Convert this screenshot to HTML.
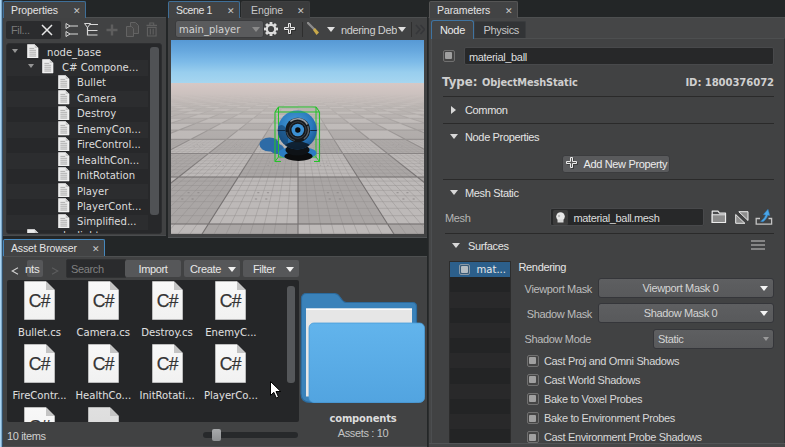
<!DOCTYPE html>
<html><head><meta charset="utf-8">
<style>
*{box-sizing:border-box;margin:0;padding:0}
html,body{width:785px;height:447px;overflow:hidden;background:#232627}
body{position:relative;font-family:"Liberation Sans",sans-serif;font-size:11px;color:#d6d6d6;letter-spacing:-0.35px}
.abs{position:absolute}
.panel{position:absolute;background:#414243;border-top:1px solid #4d4f50}
.tab{position:absolute;height:17px;background:#424344;border:1px solid #3f6f98;border-bottom:none;border-radius:2px 2px 0 0;line-height:16px;padding-left:7px;color:#e4e4e4;white-space:nowrap;font-size:10.5px;letter-spacing:-0.1px}
.tab.in{background:#3a3b3c;border-color:#3e3f40;color:#c8c8c8}
.tab .x{position:absolute;right:4.5px;top:0.5px;font-size:8.5px;color:#c8c8c8;letter-spacing:0}
.os{font-family:"DejaVu Sans Condensed","DejaVu Sans",sans-serif;font-size:11.2px;letter-spacing:0}
.t{position:absolute;white-space:nowrap;line-height:14px}
.row{position:absolute;left:0;width:141px;height:15.45px}
.row.alt{background:#2c2d2f}
.sep{position:absolute;left:443px;width:331px;height:1px;background:#2c2c2c}
.cb{position:absolute;width:11px;height:11px;background:#565656;border-radius:2px}
.cb:after{content:"";position:absolute;left:2px;top:2px;width:7px;height:7px;background:#a8a8a8;border-radius:1px}
.combo{position:absolute;height:19px;background:#565656;border-radius:2px;line-height:18px;text-align:center;color:#d8d8d8}
.btn{position:absolute;background:#565759;border-radius:2px;text-align:center;color:#e8e8e8}
.arr{position:absolute;width:0;height:0;border-left:4px solid transparent;border-right:4px solid transparent;border-top:5px solid #e0e0e0}
.arrr{position:absolute;width:0;height:0;border-top:4px solid transparent;border-bottom:4px solid transparent;border-left:5px solid #e0e0e0}
</style></head><body>

<!-- left window edge -->
<div class="abs" style="left:0;top:0;width:1px;height:447px;background:#a9d4f3"></div>
<div class="abs" style="left:1px;top:0;width:1px;height:447px;background:#7fa9c9"></div>
<div class="abs" style="left:2px;top:0;width:1px;height:447px;background:#33506a"></div>

<!-- ================= PROPERTIES ================= -->
<div class="panel" style="left:3px;top:17px;width:163px;height:219px;border-bottom:1px solid #4a4c4e"></div>
<div class="tab" style="left:3px;top:1px;width:83px">Properties<span class="x">✕</span></div>
<div id="props">
<div class="abs" style="left:6px;top:21px;width:55px;height:18px;background:#2b2c2e;border-radius:2px"></div>
<div class="t" style="left:11px;top:23px;color:#7a7a7a">Fil...</div>
<svg class="abs" style="left:41px;top:24px" width="12" height="12" viewBox="0 0 12 12"><path d="M1 1l10 10M11 1L1 11" stroke="#e8e8e8" stroke-width="1.5"/></svg>
<svg class="abs" style="left:65px;top:22px" width="14" height="16" viewBox="0 0 14 16"><path d="M1 1.5l4 2.5l-4 2.5zM1 9.5l4 2.5l-4 2.5z" fill="none" stroke="#d8d8d8" stroke-width="1"/><path d="M5 4h8M5 12h8" stroke="#d8d8d8" stroke-width="1.2"/></svg>
<svg class="abs" style="left:84px;top:22px" width="15" height="16" viewBox="0 0 15 16"><path d="M0.500 1.500h6l-3 4z" fill="none" stroke="#d8d8d8" stroke-width="1"/><path d="M6 2.5h8M3.500 5v8.500M3.500 8.500h10M3.500 13h10" stroke="#d8d8d8" stroke-width="1.2" fill="none"/></svg>
<svg class="abs" style="left:106px;top:24px" width="12" height="12" viewBox="0 0 12 12"><path d="M6 0.5v11M0.5 6h11" stroke="#5e5e5e" stroke-width="2.4"/></svg>
<svg class="abs" style="left:126px;top:22px" width="13" height="15" viewBox="0 0 13 15"><path d="M4.5 0.5h5l3 3v8h-8z" fill="#4a4a4a" stroke="#636363"/><path d="M0.5 4.5h5l2 2v8h-7z" fill="#4a4a4a" stroke="#636363"/></svg>
<svg class="abs" style="left:146px;top:22px" width="11.5" height="14.5" viewBox="0 0 12 15"><path d="M0.5 3.5h11M4 3V1h4v2M1.5 5.5h9v9h-9zM4.5 7v6M7.5 7v6" fill="none" stroke="#606060" stroke-width="1.2"/></svg>
<div class="abs" style="left:6px;top:43px;width:156px;height:190.5px;background:#27282a;border-radius:3px;overflow:hidden;border:1px solid #2d2e30">
<div class="row" style="top:1.00px"></div>
<svg class="abs" style="left:20px;top:-0.2px" width="11.5" height="14.5" viewBox="0 0 12 15"><path d="M0.5 0.5h7.5l3.5 3.5v10.5h-11z" fill="#ececec" stroke="#fafafa" stroke-width="0.6"/><path d="M8 0.5v3.5h3.5z" fill="#c8c8c8"/><path d="M2.5 4.5h5M2.5 6.5h7M2.5 8.5h7M2.5 10.5h7M2.5 12.5h7" stroke="#a2a2a2" stroke-width="0.9"/></svg>
<div class="t os" style="left:40px;top:1.50px;color:#dcdcdc">node_base</div>
<div class="arr" style="left:4.5px;top:5.0px;border-top-color:#959595;border-left-width:3.5px;border-right-width:3.5px;border-top-width:4.2px"></div>
<div class="row alt" style="top:16.45px"></div>
<svg class="abs" style="left:35px;top:15.2px" width="11.5" height="14.5" viewBox="0 0 12 15"><path d="M0.5 0.5h7.5l3.5 3.5v10.5h-11z" fill="#ececec" stroke="#fafafa" stroke-width="0.6"/><path d="M8 0.5v3.5h3.5z" fill="#c8c8c8"/><path d="M2.5 4.5h5M2.5 6.5h7M2.5 8.5h7M2.5 10.5h7M2.5 12.5h7" stroke="#a2a2a2" stroke-width="0.9"/></svg>
<div class="t os" style="left:55px;top:16.95px;color:#dcdcdc">C# Compone...</div>
<div class="arr" style="left:20.5px;top:20.4px;border-top-color:#959595;border-left-width:3.5px;border-right-width:3.5px;border-top-width:4.2px"></div>
<div class="row" style="top:31.90px"></div>
<svg class="abs" style="left:51px;top:30.7px" width="11.5" height="14.5" viewBox="0 0 12 15"><path d="M0.5 0.5h7.5l3.5 3.5v10.5h-11z" fill="#ececec" stroke="#fafafa" stroke-width="0.6"/><path d="M8 0.5v3.5h3.5z" fill="#c8c8c8"/><path d="M2.5 4.5h5M2.5 6.5h7M2.5 8.5h7M2.5 10.5h7M2.5 12.5h7" stroke="#a2a2a2" stroke-width="0.9"/></svg>
<div class="t os" style="left:70px;top:32.40px;color:#dcdcdc">Bullet</div>
<div class="row alt" style="top:47.35px"></div>
<svg class="abs" style="left:51px;top:46.1px" width="11.5" height="14.5" viewBox="0 0 12 15"><path d="M0.5 0.5h7.5l3.5 3.5v10.5h-11z" fill="#ececec" stroke="#fafafa" stroke-width="0.6"/><path d="M8 0.5v3.5h3.5z" fill="#c8c8c8"/><path d="M2.5 4.5h5M2.5 6.5h7M2.5 8.5h7M2.5 10.5h7M2.5 12.5h7" stroke="#a2a2a2" stroke-width="0.9"/></svg>
<div class="t os" style="left:70px;top:47.85px;color:#dcdcdc">Camera</div>
<div class="row" style="top:62.80px"></div>
<svg class="abs" style="left:51px;top:61.6px" width="11.5" height="14.5" viewBox="0 0 12 15"><path d="M0.5 0.5h7.5l3.5 3.5v10.5h-11z" fill="#ececec" stroke="#fafafa" stroke-width="0.6"/><path d="M8 0.5v3.5h3.5z" fill="#c8c8c8"/><path d="M2.5 4.5h5M2.5 6.5h7M2.5 8.5h7M2.5 10.5h7M2.5 12.5h7" stroke="#a2a2a2" stroke-width="0.9"/></svg>
<div class="t os" style="left:70px;top:63.30px;color:#dcdcdc">Destroy</div>
<div class="row alt" style="top:78.25px"></div>
<svg class="abs" style="left:51px;top:77.0px" width="11.5" height="14.5" viewBox="0 0 12 15"><path d="M0.5 0.5h7.5l3.5 3.5v10.5h-11z" fill="#ececec" stroke="#fafafa" stroke-width="0.6"/><path d="M8 0.5v3.5h3.5z" fill="#c8c8c8"/><path d="M2.5 4.5h5M2.5 6.5h7M2.5 8.5h7M2.5 10.5h7M2.5 12.5h7" stroke="#a2a2a2" stroke-width="0.9"/></svg>
<div class="t os" style="left:70px;top:78.75px;color:#dcdcdc">EnemyCon...</div>
<div class="row" style="top:93.70px"></div>
<svg class="abs" style="left:51px;top:92.5px" width="11.5" height="14.5" viewBox="0 0 12 15"><path d="M0.5 0.5h7.5l3.5 3.5v10.5h-11z" fill="#ececec" stroke="#fafafa" stroke-width="0.6"/><path d="M8 0.5v3.5h3.5z" fill="#c8c8c8"/><path d="M2.5 4.5h5M2.5 6.5h7M2.5 8.5h7M2.5 10.5h7M2.5 12.5h7" stroke="#a2a2a2" stroke-width="0.9"/></svg>
<div class="t os" style="left:70px;top:94.20px;color:#dcdcdc">FireControl...</div>
<div class="row alt" style="top:109.15px"></div>
<svg class="abs" style="left:51px;top:107.9px" width="11.5" height="14.5" viewBox="0 0 12 15"><path d="M0.5 0.5h7.5l3.5 3.5v10.5h-11z" fill="#ececec" stroke="#fafafa" stroke-width="0.6"/><path d="M8 0.5v3.5h3.5z" fill="#c8c8c8"/><path d="M2.5 4.5h5M2.5 6.5h7M2.5 8.5h7M2.5 10.5h7M2.5 12.5h7" stroke="#a2a2a2" stroke-width="0.9"/></svg>
<div class="t os" style="left:70px;top:109.65px;color:#dcdcdc">HealthCon...</div>
<div class="row" style="top:124.60px"></div>
<svg class="abs" style="left:51px;top:123.4px" width="11.5" height="14.5" viewBox="0 0 12 15"><path d="M0.5 0.5h7.5l3.5 3.5v10.5h-11z" fill="#ececec" stroke="#fafafa" stroke-width="0.6"/><path d="M8 0.5v3.5h3.5z" fill="#c8c8c8"/><path d="M2.5 4.5h5M2.5 6.5h7M2.5 8.5h7M2.5 10.5h7M2.5 12.5h7" stroke="#a2a2a2" stroke-width="0.9"/></svg>
<div class="t os" style="left:70px;top:125.10px;color:#dcdcdc">InitRotation</div>
<div class="row alt" style="top:140.05px"></div>
<svg class="abs" style="left:51px;top:138.8px" width="11.5" height="14.5" viewBox="0 0 12 15"><path d="M0.5 0.5h7.5l3.5 3.5v10.5h-11z" fill="#ececec" stroke="#fafafa" stroke-width="0.6"/><path d="M8 0.5v3.5h3.5z" fill="#c8c8c8"/><path d="M2.5 4.5h5M2.5 6.5h7M2.5 8.5h7M2.5 10.5h7M2.5 12.5h7" stroke="#a2a2a2" stroke-width="0.9"/></svg>
<div class="t os" style="left:70px;top:140.55px;color:#dcdcdc">Player</div>
<div class="row" style="top:155.50px"></div>
<svg class="abs" style="left:51px;top:154.3px" width="11.5" height="14.5" viewBox="0 0 12 15"><path d="M0.5 0.5h7.5l3.5 3.5v10.5h-11z" fill="#ececec" stroke="#fafafa" stroke-width="0.6"/><path d="M8 0.5v3.5h3.5z" fill="#c8c8c8"/><path d="M2.5 4.5h5M2.5 6.5h7M2.5 8.5h7M2.5 10.5h7M2.5 12.5h7" stroke="#a2a2a2" stroke-width="0.9"/></svg>
<div class="t os" style="left:70px;top:156.00px;color:#dcdcdc">PlayerCont...</div>
<div class="row alt" style="top:170.95px"></div>
<svg class="abs" style="left:51px;top:169.8px" width="11.5" height="14.5" viewBox="0 0 12 15"><path d="M0.5 0.5h7.5l3.5 3.5v10.5h-11z" fill="#ececec" stroke="#fafafa" stroke-width="0.6"/><path d="M8 0.5v3.5h3.5z" fill="#c8c8c8"/><path d="M2.5 4.5h5M2.5 6.5h7M2.5 8.5h7M2.5 10.5h7M2.5 12.5h7" stroke="#a2a2a2" stroke-width="0.9"/></svg>
<div class="t os" style="left:70px;top:171.45px;color:#dcdcdc">Simplified...</div>
<div class="row" style="top:186.40px"></div>
<svg class="abs" style="left:20px;top:185.2px" width="11.5" height="14.5" viewBox="0 0 12 15"><path d="M0.5 0.5h7.5l3.5 3.5v10.5h-11z" fill="#ececec" stroke="#fafafa" stroke-width="0.6"/><path d="M8 0.5v3.5h3.5z" fill="#c8c8c8"/><path d="M2.5 4.5h5M2.5 6.5h7M2.5 8.5h7M2.5 10.5h7M2.5 12.5h7" stroke="#a2a2a2" stroke-width="0.9"/></svg>
<div class="t os" style="left:40px;top:185.10px;color:#dcdcdc">node_light</div>

<div class="abs" style="left:143px;top:2.5px;width:8.5px;height:168px;background:#505255;border-radius:3px"></div>
</div>
</div>

<!-- ================= SCENE ================= -->
<div class="panel" style="left:168px;top:17px;width:259px;height:221px;border-bottom:1px solid #505355"></div>
<div class="tab" style="left:168px;top:1px;width:72px;letter-spacing:-0.35px">Scene 1<span class="x" style="right:4.5px">✕</span></div>
<div class="tab in" style="left:241px;top:1px;width:69px;padding-left:9px">Engine<span class="x" style="right:4.5px">✕</span></div>
<div id="scene">
<div class="abs" style="left:175px;top:20px;width:88.5px;height:18px;background:#5a5b5d;border-radius:3px;border:1px solid #3a3b3d"></div>
<div class="t os" style="left:179px;top:22.5px;color:#d2d2d2;font-size:11.1px">main_player</div>
<div class="arr" style="left:252px;top:27px;border-top-color:#8a8a8a;border-left-width:4px;border-right-width:4px"></div>
<svg class="abs" style="left:264px;top:22px" width="14" height="14" viewBox="-7 -7 14 14"><g fill="#dcdcdc"><rect x="-1.4" y="-7" width="2.8" height="3.2" transform="rotate(0)"/><rect x="-1.4" y="-7" width="2.8" height="3.2" transform="rotate(45)"/><rect x="-1.4" y="-7" width="2.8" height="3.2" transform="rotate(90)"/><rect x="-1.4" y="-7" width="2.8" height="3.2" transform="rotate(135)"/><rect x="-1.4" y="-7" width="2.8" height="3.2" transform="rotate(180)"/><rect x="-1.4" y="-7" width="2.8" height="3.2" transform="rotate(225)"/><rect x="-1.4" y="-7" width="2.8" height="3.2" transform="rotate(270)"/><rect x="-1.4" y="-7" width="2.8" height="3.2" transform="rotate(315)"/></g><circle r="4.2" fill="none" stroke="#dcdcdc" stroke-width="2.2"/></svg>
<svg class="abs" style="left:284px;top:23px" width="12" height="12" viewBox="0 0 12 12"><path d="M5.500 1.500h2v4h4v2h-4v4h-2v-4h-4v-2h4z" fill="none" stroke="#222" stroke-width="1" opacity="0.6"/><path d="M4.500 0.500h2v4h4v2h-4v4h-2v-4h-4v-2h4z" fill="#555" stroke="#ececec" stroke-width="1"/></svg>
<div class="abs" style="left:302px;top:22px;width:1px;height:15px;background:#2e2e2e"></div>
<svg class="abs" style="left:307px;top:22px" width="13" height="14" viewBox="0 0 13 14"><path d="M1 1l6 6" stroke="#8c8c8c" stroke-width="2.4" stroke-linecap="round"/><path d="M6 8l2-2l4 4.5l-2.5 2.5z" fill="#c9a94a"/></svg>
<div class="arr" style="left:327px;top:27px"></div>
<div class="t" style="left:341px;top:23px;width:56px;overflow:hidden;color:#d0d0d0;direction:rtl;text-align:right"><span style="direction:ltr;unicode-bidi:bidi-override;display:inline-block">Rendering Deb</span></div>
<div class="arr" style="left:398px;top:27px"></div>
<div class="abs" style="left:411px;top:22px;width:1px;height:15px;background:#2e2e2e"></div>
<svg class="abs" style="left:415px;top:24px" width="10" height="11" viewBox="0 0 10 11"><path d="M1 1l4 4.5l-4 4.5M5.5 1l4 4.5l-4 4.5" fill="none" stroke="#36373a" stroke-width="1.6"/></svg>
<svg class="abs" style="left:171px;top:40px" width="253" height="194" viewBox="0 0 253 194"><defs><linearGradient id="sky" x1="0" y1="0" x2="0" y2="1"><stop offset="0" stop-color="#5799d5"/><stop offset="0.25" stop-color="#67a8de"/><stop offset="0.5" stop-color="#7cbae8"/><stop offset="0.75" stop-color="#98ceee"/><stop offset="1" stop-color="#a6d6f0"/></linearGradient><linearGradient id="fog" x1="0" y1="0" x2="0" y2="1"><stop offset="0" stop-color="#d6c8c6" stop-opacity="1"/><stop offset="0.08" stop-color="#d2c6c3" stop-opacity="0.9"/><stop offset="0.25" stop-color="#c9c2be" stop-opacity="0.6"/><stop offset="0.6" stop-color="#c0bbb8" stop-opacity="0.25"/><stop offset="1" stop-color="#bab6b4" stop-opacity="0"/></linearGradient><radialGradient id="ball" cx="0.45" cy="0.35" r="0.7"><stop offset="0" stop-color="#479cd8"/><stop offset="0.6" stop-color="#2a7abd"/><stop offset="1" stop-color="#184f86"/></radialGradient><radialGradient id="metal" cx="0.5" cy="0.4" r="0.6"><stop offset="0" stop-color="#222"/><stop offset="0.6" stop-color="#3a3f44"/><stop offset="0.8" stop-color="#9aa4ac"/><stop offset="1" stop-color="#1a1a1a"/></radialGradient><linearGradient id="lg" gradientUnits="userSpaceOnUse" x1="0" y1="43" x2="0" y2="194"><stop offset="0" stop-color="#6e6a6a" stop-opacity="0"/><stop offset="0.1" stop-color="#6e6a6a" stop-opacity="0.12"/><stop offset="0.3" stop-color="#6e6a6a" stop-opacity="0.55"/><stop offset="0.6" stop-color="#6e6a6a" stop-opacity="0.85"/><stop offset="1" stop-color="#6e6a6a" stop-opacity="0.9"/></linearGradient><linearGradient id="lf" gradientUnits="userSpaceOnUse" x1="0" y1="43" x2="0" y2="194"><stop offset="0" stop-color="#8a8685" stop-opacity="0"/><stop offset="0.3" stop-color="#8a8685" stop-opacity="0.15"/><stop offset="0.6" stop-color="#8a8685" stop-opacity="0.55"/><stop offset="1" stop-color="#8a8685" stop-opacity="0.7"/></linearGradient></defs><rect width="253" height="43" fill="url(#sky)"/><rect y="43" width="253" height="151" fill="#bdb9b8"/><path d="M27.9 199.0L127.0 199.0L127.0 184.0L37.5 184.0zM226.1 199.0L325.1 199.0L306.1 184.0L216.5 184.0zM-52.1 184.0L37.5 184.0L67.3 137.0L7.6 137.0zM127.0 184.0L216.5 184.0L186.7 137.0L127.0 137.0zM306.1 184.0L395.6 184.0L306.1 137.0L246.4 137.0zM-52.1 137.0L7.6 137.0L37.5 113.5L-7.3 113.5zM67.3 137.0L127.0 137.0L127.0 113.5L82.2 113.5zM186.7 137.0L246.4 137.0L216.5 113.5L171.8 113.5zM-52.1 113.5L-7.3 113.5L19.6 99.4L-16.3 99.4zM37.5 113.5L82.2 113.5L91.2 99.4L55.4 99.4zM127.0 113.5L171.8 113.5L162.8 99.4L127.0 99.4zM216.5 113.5L261.3 113.5L234.4 99.4L198.6 99.4zM-52.1 99.4L-16.3 99.4L7.6 90.0L-22.2 90.0zM19.6 99.4L55.4 99.4L67.3 90.0L37.5 90.0zM91.2 99.4L127.0 99.4L127.0 90.0L97.2 90.0zM162.8 99.4L198.6 99.4L186.7 90.0L156.8 90.0zM234.4 99.4L270.3 99.4L246.4 90.0L216.5 90.0zM7.6 90.0L37.5 90.0L50.3 83.3L24.7 83.3zM67.3 90.0L97.2 90.0L101.4 83.3L75.8 83.3zM127.0 90.0L156.8 90.0L152.6 83.3L127.0 83.3zM186.7 90.0L216.5 90.0L203.7 83.3L178.2 83.3zM246.4 90.0L276.2 90.0L254.9 83.3L229.3 83.3zM-0.9 83.3L24.7 83.3L37.5 78.3L15.1 78.3zM50.3 83.3L75.8 83.3L82.2 78.3L59.8 78.3zM101.4 83.3L127.0 83.3L127.0 78.3L104.6 78.3zM152.6 83.3L178.2 83.3L171.8 78.3L149.4 78.3zM203.7 83.3L229.3 83.3L216.5 78.3L194.2 78.3zM254.9 83.3L280.5 83.3L261.3 78.3L238.9 78.3zM-7.3 78.3L15.1 78.3L27.5 74.3L7.6 74.3zM37.5 78.3L59.8 78.3L67.3 74.3L47.4 74.3zM82.2 78.3L104.6 78.3L107.1 74.3L87.2 74.3zM127.0 78.3L149.4 78.3L146.9 74.3L127.0 74.3zM171.8 78.3L194.2 78.3L186.7 74.3L166.8 74.3zM216.5 78.3L238.9 78.3L226.5 74.3L206.6 74.3zM261.3 78.3L283.7 78.3L266.3 74.3L246.4 74.3zM-12.3 74.3L7.6 74.3L19.6 71.2L1.6 71.2zM27.5 74.3L47.4 74.3L55.4 71.2L37.5 71.2zM67.3 74.3L87.2 74.3L91.2 71.2L73.3 71.2zM107.1 74.3L127.0 74.3L127.0 71.2L109.1 71.2zM146.9 74.3L166.8 74.3L162.8 71.2L144.9 71.2zM186.7 74.3L206.6 74.3L198.6 71.2L180.7 71.2zM226.5 74.3L246.4 74.3L234.4 71.2L216.5 71.2zM266.3 74.3L286.2 74.3L270.3 71.2L252.4 71.2zM-16.3 71.2L1.6 71.2L13.0 68.6L-3.2 68.6zM19.6 71.2L37.5 71.2L45.6 68.6L29.3 68.6zM55.4 71.2L73.3 71.2L78.2 68.6L61.9 68.6zM91.2 71.2L109.1 71.2L110.7 68.6L94.4 68.6zM127.0 71.2L144.9 71.2L143.3 68.6L127.0 68.6zM162.8 71.2L180.7 71.2L175.8 68.6L159.6 68.6zM198.6 71.2L216.5 71.2L208.4 68.6L192.1 68.6zM234.4 71.2L252.4 71.2L241.0 68.6L224.7 68.6zM-19.5 68.6L-3.2 68.6L7.6 66.5L-7.3 66.5zM13.0 68.6L29.3 68.6L37.5 66.5L22.5 66.5zM45.6 68.6L61.9 68.6L67.3 66.5L52.4 66.5zM78.2 68.6L94.4 68.6L97.2 66.5L82.2 66.5zM110.7 68.6L127.0 68.6L127.0 66.5L112.1 66.5zM143.3 68.6L159.6 68.6L156.8 66.5L141.9 66.5zM175.8 68.6L192.1 68.6L186.7 66.5L171.8 66.5zM208.4 68.6L224.7 68.6L216.5 66.5L201.6 66.5zM241.0 68.6L257.2 68.6L246.4 66.5L231.5 66.5zM-22.2 66.5L-7.3 66.5L3.0 64.7L-10.7 64.7zM7.6 66.5L22.5 66.5L30.6 64.7L16.8 64.7zM37.5 66.5L52.4 66.5L58.1 64.7L44.4 64.7zM67.3 66.5L82.2 66.5L85.7 64.7L71.9 64.7zM97.2 66.5L112.1 66.5L113.2 64.7L99.5 64.7zM127.0 66.5L141.9 66.5L140.8 64.7L127.0 64.7zM156.8 66.5L171.8 66.5L168.3 64.7L154.5 64.7zM186.7 66.5L201.6 66.5L195.9 64.7L182.1 64.7zM216.5 66.5L231.5 66.5L223.4 64.7L209.6 64.7zM246.4 66.5L261.3 66.5L251.0 64.7L237.2 64.7zM3.0 64.7L16.8 64.7L24.7 63.1L11.9 63.1zM30.6 64.7L44.4 64.7L50.3 63.1L37.5 63.1zM58.1 64.7L71.9 64.7L75.8 63.1L63.0 63.1zM85.7 64.7L99.5 64.7L101.4 63.1L88.6 63.1zM113.2 64.7L127.0 64.7L127.0 63.1L114.2 63.1zM140.8 64.7L154.5 64.7L152.6 63.1L139.8 63.1zM168.3 64.7L182.1 64.7L178.2 63.1L165.4 63.1zM195.9 64.7L209.6 64.7L203.7 63.1L191.0 63.1zM223.4 64.7L237.2 64.7L229.3 63.1L216.5 63.1zM251.0 64.7L264.7 64.7L254.9 63.1L242.1 63.1zM-0.9 63.1L11.9 63.1L19.6 61.8L7.6 61.8zM24.7 63.1L37.5 63.1L43.4 61.8L31.5 61.8zM50.3 63.1L63.0 63.1L67.3 61.8L55.4 61.8zM75.8 63.1L88.6 63.1L91.2 61.8L79.2 61.8zM101.4 63.1L114.2 63.1L115.1 61.8L103.1 61.8zM127.0 63.1L139.8 63.1L138.9 61.8L127.0 61.8zM152.6 63.1L165.4 63.1L162.8 61.8L150.9 61.8zM178.2 63.1L191.0 63.1L186.7 61.8L174.8 61.8zM203.7 63.1L216.5 63.1L210.6 61.8L198.6 61.8zM229.3 63.1L242.1 63.1L234.4 61.8L222.5 61.8zM254.9 63.1L267.7 63.1L258.3 61.8L246.4 61.8zM-4.3 61.8L7.6 61.8L15.1 60.6L3.9 60.6zM19.6 61.8L31.5 61.8L37.5 60.6L26.3 60.6zM43.4 61.8L55.4 61.8L59.8 60.6L48.7 60.6zM67.3 61.8L79.2 61.8L82.2 60.6L71.0 60.6zM91.2 61.8L103.1 61.8L104.6 60.6L93.4 60.6zM115.1 61.8L127.0 61.8L127.0 60.6L115.8 60.6zM138.9 61.8L150.9 61.8L149.4 60.6L138.2 60.6zM162.8 61.8L174.8 61.8L171.8 60.6L160.6 60.6zM186.7 61.8L198.6 61.8L194.2 60.6L183.0 60.6zM210.6 61.8L222.5 61.8L216.5 60.6L205.3 60.6zM234.4 61.8L246.4 61.8L238.9 60.6L227.7 60.6zM258.3 61.8L270.3 61.8L261.3 60.6L250.1 60.6zM-7.3 60.6L3.9 60.6L11.1 59.6L0.6 59.6zM15.1 60.6L26.3 60.6L32.2 59.6L21.7 59.6zM37.5 60.6L48.7 60.6L53.3 59.6L42.7 59.6zM59.8 60.6L71.0 60.6L74.3 59.6L63.8 59.6zM82.2 60.6L93.4 60.6L95.4 59.6L84.9 59.6zM104.6 60.6L115.8 60.6L116.5 59.6L105.9 59.6zM127.0 60.6L138.2 60.6L137.5 59.6L127.0 59.6zM149.4 60.6L160.6 60.6L158.6 59.6L148.1 59.6zM171.8 60.6L183.0 60.6L179.7 59.6L169.1 59.6zM194.2 60.6L205.3 60.6L200.7 59.6L190.2 59.6zM216.5 60.6L227.7 60.6L221.8 59.6L211.3 59.6zM238.9 60.6L250.1 60.6L242.9 59.6L232.3 59.6zM-9.9 59.6L0.6 59.6L7.6 58.7L-2.3 58.7zM11.1 59.6L21.7 59.6L27.5 58.7L17.6 58.7zM32.2 59.6L42.7 59.6L47.4 58.7L37.5 58.7zM53.3 59.6L63.8 59.6L67.3 58.7L57.4 58.7zM74.3 59.6L84.9 59.6L87.2 58.7L77.3 58.7zM95.4 59.6L105.9 59.6L107.1 58.7L97.2 58.7zM116.5 59.6L127.0 59.6L127.0 58.7L117.1 58.7zM137.5 59.6L148.1 59.6L146.9 58.7L136.9 58.7zM158.6 59.6L169.1 59.6L166.8 58.7L156.8 58.7zM179.7 59.6L190.2 59.6L186.7 58.7L176.7 58.7zM200.7 59.6L211.3 59.6L206.6 58.7L196.6 58.7zM221.8 59.6L232.3 59.6L226.5 58.7L216.5 58.7zM242.9 59.6L253.4 59.6L246.4 58.7L236.4 58.7zM-12.3 58.7L-2.3 58.7L4.5 57.8L-4.9 57.8zM7.6 58.7L17.6 58.7L23.3 57.8L13.9 57.8zM27.5 58.7L37.5 58.7L42.2 57.8L32.8 57.8zM47.4 58.7L57.4 58.7L61.0 57.8L51.6 57.8zM67.3 58.7L77.3 58.7L79.9 57.8L70.5 57.8zM87.2 58.7L97.2 58.7L98.7 57.8L89.3 57.8zM107.1 58.7L117.1 58.7L117.6 57.8L108.2 57.8zM127.0 58.7L136.9 58.7L136.4 57.8L127.0 57.8zM146.9 58.7L156.8 58.7L155.3 57.8L145.8 57.8zM166.8 58.7L176.7 58.7L174.1 57.8L164.7 57.8zM186.7 58.7L196.6 58.7L193.0 57.8L183.5 57.8zM206.6 58.7L216.5 58.7L211.8 57.8L202.4 57.8zM226.5 58.7L236.4 58.7L230.7 57.8L221.2 57.8zM246.4 58.7L256.3 58.7L249.5 57.8L240.1 57.8zM-14.4 57.8L-4.9 57.8L1.6 57.1L-7.3 57.1zM4.5 57.8L13.9 57.8L19.6 57.1L10.6 57.1zM23.3 57.8L32.8 57.8L37.5 57.1L28.5 57.1zM42.2 57.8L51.6 57.8L55.4 57.1L46.4 57.1zM61.0 57.8L70.5 57.8L73.3 57.1L64.3 57.1zM79.9 57.8L89.3 57.8L91.2 57.1L82.2 57.1zM98.7 57.8L108.2 57.8L109.1 57.1L100.1 57.1zM117.6 57.8L127.0 57.8L127.0 57.1L118.0 57.1zM136.4 57.8L145.8 57.8L144.9 57.1L136.0 57.1zM155.3 57.8L164.7 57.8L162.8 57.1L153.9 57.1zM174.1 57.8L183.5 57.8L180.7 57.1L171.8 57.1zM193.0 57.8L202.4 57.8L198.6 57.1L189.7 57.1zM211.8 57.8L221.2 57.8L216.5 57.1L207.6 57.1zM230.7 57.8L240.1 57.8L234.4 57.1L225.5 57.1zM249.5 57.8L258.9 57.8L252.4 57.1L243.4 57.1zM1.6 57.1L10.6 57.1L16.1 56.4L7.6 56.4zM19.6 57.1L28.5 57.1L33.2 56.4L24.7 56.4zM37.5 57.1L46.4 57.1L50.3 56.4L41.7 56.4zM55.4 57.1L64.3 57.1L67.3 56.4L58.8 56.4zM73.3 57.1L82.2 57.1L84.4 56.4L75.8 56.4zM91.2 57.1L100.1 57.1L101.4 56.4L92.9 56.4zM109.1 57.1L118.0 57.1L118.5 56.4L109.9 56.4zM127.0 57.1L136.0 57.1L135.5 56.4L127.0 56.4zM144.9 57.1L153.9 57.1L152.6 56.4L144.1 56.4zM162.8 57.1L171.8 57.1L169.6 56.4L161.1 56.4zM180.7 57.1L189.7 57.1L186.7 56.4L178.2 56.4zM198.6 57.1L207.6 57.1L203.7 56.4L195.2 56.4zM216.5 57.1L225.5 57.1L220.8 56.4L212.3 56.4zM234.4 57.1L243.4 57.1L237.9 56.4L229.3 56.4zM252.4 57.1L261.3 57.1L254.9 56.4L246.4 56.4zM-0.9 56.4L7.6 56.4L13.0 55.8L4.9 55.8zM16.1 56.4L24.7 56.4L29.3 55.8L21.2 55.8zM33.2 56.4L41.7 56.4L45.6 55.8L37.5 55.8zM50.3 56.4L58.8 56.4L61.9 55.8L53.7 55.8zM67.3 56.4L75.8 56.4L78.2 55.8L70.0 55.8zM84.4 56.4L92.9 56.4L94.4 55.8L86.3 55.8zM101.4 56.4L109.9 56.4L110.7 55.8L102.6 55.8zM118.5 56.4L127.0 56.4L127.0 55.8L118.9 55.8zM135.5 56.4L144.1 56.4L143.3 55.8L135.1 55.8zM152.6 56.4L161.1 56.4L159.6 55.8L151.4 55.8zM169.6 56.4L178.2 56.4L175.8 55.8L167.7 55.8zM186.7 56.4L195.2 56.4L192.1 55.8L184.0 55.8zM203.7 56.4L212.3 56.4L208.4 55.8L200.3 55.8zM220.8 56.4L229.3 56.4L224.7 55.8L216.5 55.8zM237.9 56.4L246.4 56.4L241.0 55.8L232.8 55.8zM254.9 56.4L263.4 56.4L257.2 55.8L249.1 55.8zM-3.2 55.8L4.9 55.8L10.2 55.3L2.4 55.3zM13.0 55.8L21.2 55.8L25.8 55.3L18.0 55.3zM29.3 55.8L37.5 55.8L41.4 55.3L33.6 55.3zM45.6 55.8L53.7 55.8L56.9 55.3L49.1 55.3zM61.9 55.8L70.0 55.8L72.5 55.3L64.7 55.3zM78.2 55.8L86.3 55.8L88.1 55.3L80.3 55.3zM94.4 55.8L102.6 55.8L103.6 55.3L95.9 55.3zM110.7 55.8L118.9 55.8L119.2 55.3L111.4 55.3zM127.0 55.8L135.1 55.8L134.8 55.3L127.0 55.3zM143.3 55.8L151.4 55.8L150.4 55.3L142.6 55.3zM159.6 55.8L167.7 55.8L165.9 55.3L158.1 55.3zM175.8 55.8L184.0 55.8L181.5 55.3L173.7 55.3zM192.1 55.8L200.3 55.8L197.1 55.3L189.3 55.3zM208.4 55.8L216.5 55.8L212.6 55.3L204.9 55.3zM224.7 55.8L232.8 55.8L228.2 55.3L220.4 55.3zM241.0 55.8L249.1 55.8L243.8 55.3L236.0 55.3zM257.2 55.8L265.4 55.8L259.4 55.3L251.6 55.3zM-5.4 55.3L2.4 55.3L7.6 54.8L0.2 54.8zM10.2 55.3L18.0 55.3L22.5 54.8L15.1 54.8zM25.8 55.3L33.6 55.3L37.5 54.8L30.0 54.8zM41.4 55.3L49.1 55.3L52.4 54.8L44.9 54.8zM56.9 55.3L64.7 55.3L67.3 54.8L59.8 54.8zM72.5 55.3L80.3 55.3L82.2 54.8L74.8 54.8zM88.1 55.3L95.9 55.3L97.2 54.8L89.7 54.8zM103.6 55.3L111.4 55.3L112.1 54.8L104.6 54.8zM119.2 55.3L127.0 55.3L127.0 54.8L119.5 54.8zM134.8 55.3L142.6 55.3L141.9 54.8L134.5 54.8zM150.4 55.3L158.1 55.3L156.8 54.8L149.4 54.8zM165.9 55.3L173.7 55.3L171.8 54.8L164.3 54.8zM181.5 55.3L189.3 55.3L186.7 54.8L179.2 54.8zM197.1 55.3L204.9 55.3L201.6 54.8L194.2 54.8zM212.6 55.3L220.4 55.3L216.5 54.8L209.1 54.8zM228.2 55.3L236.0 55.3L231.5 54.8L224.0 54.8zM243.8 55.3L251.6 55.3L246.4 54.8L238.9 54.8z" fill="#aaa6a5"/><rect y="43" width="253" height="11.8" fill="#b3afae"/><path d="M0 193.4H253M0 184.0H253M0 175.7H253M0 168.3H253M0 161.7H253M0 155.8H253M0 150.4H253M0 145.5H253M0 141.1H253M0 137.0H253M0 133.2H253M0 129.8H253M0 126.6H253M0 123.6H253M0 120.8H253M0 118.2H253M0 115.8H253M0 113.5H253M0 111.4H253M0 109.4H253M0 107.5H253M0 105.7H253M0 104.0H253M0 102.4H253M0 100.8H253M-340.4 194.0L-47.6 99.4M-328.5 194.0L-43.1 99.4M-316.5 194.0L-38.6 99.4M-304.5 194.0L-34.2 99.4M-292.5 194.0L-29.7 99.4M-280.5 194.0L-25.2 99.4M-268.5 194.0L-20.7 99.4M-244.6 194.0L-11.8 99.4M-232.6 194.0L-7.3 99.4M-220.6 194.0L-2.8 99.4M-208.6 194.0L1.6 99.4M-196.6 194.0L6.1 99.4M-184.6 194.0L10.6 99.4M-172.6 194.0L15.1 99.4M-148.7 194.0L24.0 99.4M-136.7 194.0L28.5 99.4M-124.7 194.0L33.0 99.4M-112.7 194.0L37.5 99.4M-100.7 194.0L41.9 99.4M-88.7 194.0L46.4 99.4M-76.8 194.0L50.9 99.4M-52.8 194.0L59.8 99.4M-40.8 194.0L64.3 99.4M-28.8 194.0L68.8 99.4M-16.8 194.0L73.3 99.4M-4.8 194.0L77.8 99.4M7.1 194.0L82.2 99.4M19.1 194.0L86.7 99.4M43.1 194.0L95.7 99.4M55.1 194.0L100.1 99.4M67.1 194.0L104.6 99.4M79.1 194.0L109.1 99.4M91.0 194.0L113.6 99.4M103.0 194.0L118.0 99.4M115.0 194.0L122.5 99.4M139.0 194.0L131.5 99.4M151.0 194.0L136.0 99.4M163.0 194.0L140.4 99.4M174.9 194.0L144.9 99.4M186.9 194.0L149.4 99.4M198.9 194.0L153.9 99.4M210.9 194.0L158.3 99.4M234.9 194.0L167.3 99.4M246.9 194.0L171.8 99.4M258.8 194.0L176.2 99.4M270.8 194.0L180.7 99.4M282.8 194.0L185.2 99.4M294.8 194.0L189.7 99.4M306.8 194.0L194.2 99.4M330.8 194.0L203.1 99.4M342.7 194.0L207.6 99.4M354.7 194.0L212.1 99.4M366.7 194.0L216.5 99.4M378.7 194.0L221.0 99.4M390.7 194.0L225.5 99.4M402.7 194.0L230.0 99.4M426.6 194.0L238.9 99.4M438.6 194.0L243.4 99.4M450.6 194.0L247.9 99.4M462.6 194.0L252.4 99.4M474.6 194.0L256.8 99.4M486.6 194.0L261.3 99.4M498.6 194.0L265.8 99.4M522.5 194.0L274.7 99.4M534.5 194.0L279.2 99.4M546.5 194.0L283.7 99.4M558.5 194.0L288.2 99.4M570.5 194.0L292.6 99.4M582.5 194.0L297.1 99.4M594.4 194.0L301.6 99.4" stroke="url(#lf)" stroke-width="0.6" fill="none"/><path d="M0 184.0H253M0 137.0H253M0 113.5H253M0 99.4H253M0 90.0H253M0 83.3H253M0 78.3H253M0 74.3H253M0 71.2H253M0 68.6H253M0 66.5H253M0 64.7H253M0 63.1H253M0 61.8H253M0 60.6H253M0 59.6H253M0 58.7H253M0 57.8H253M0 57.1H253M0 56.4H253M0 55.8H253M0 55.3H253M-2787.7 196.0L-96.8 54.8M-2690.5 196.0L-89.4 54.8M-2593.3 196.0L-81.9 54.8M-2496.2 196.0L-74.5 54.8M-2399.0 196.0L-67.0 54.8M-2301.9 196.0L-59.5 54.8M-2204.7 196.0L-52.1 54.8M-2107.6 196.0L-44.6 54.8M-2010.4 196.0L-37.2 54.8M-1913.3 196.0L-29.7 54.8M-1816.1 196.0L-22.2 54.8M-1718.9 196.0L-14.8 54.8M-1621.8 196.0L-7.3 54.8M-1524.6 196.0L0.2 54.8M-1427.5 196.0L7.6 54.8M-1330.3 196.0L15.1 54.8M-1233.2 196.0L22.5 54.8M-1136.0 196.0L30.0 54.8M-1038.9 196.0L37.5 54.8M-941.7 196.0L44.9 54.8M-844.5 196.0L52.4 54.8M-747.4 196.0L59.8 54.8M-650.2 196.0L67.3 54.8M-553.1 196.0L74.8 54.8M-455.9 196.0L82.2 54.8M-358.8 196.0L89.7 54.8M-261.6 196.0L97.2 54.8M-164.5 196.0L104.6 54.8M-67.3 196.0L112.1 54.8M29.8 196.0L119.5 54.8M127.0 196.0L127.0 54.8M224.2 196.0L134.5 54.8M321.3 196.0L141.9 54.8M418.5 196.0L149.4 54.8M515.6 196.0L156.8 54.8M612.8 196.0L164.3 54.8M709.9 196.0L171.8 54.8M807.1 196.0L179.2 54.8M904.2 196.0L186.7 54.8M1001.4 196.0L194.2 54.8M1098.5 196.0L201.6 54.8M1195.7 196.0L209.1 54.8M1292.9 196.0L216.5 54.8M1390.0 196.0L224.0 54.8M1487.2 196.0L231.5 54.8M1584.3 196.0L238.9 54.8M1681.5 196.0L246.4 54.8M1778.6 196.0L253.8 54.8M1875.8 196.0L261.3 54.8M1972.9 196.0L268.8 54.8M2070.1 196.0L276.2 54.8M2167.3 196.0L283.7 54.8M2264.4 196.0L291.2 54.8M2361.6 196.0L298.6 54.8M2458.7 196.0L306.1 54.8M2555.9 196.0L313.5 54.8M2653.0 196.0L321.0 54.8M2750.2 196.0L328.5 54.8M2847.3 196.0L335.9 54.8M2944.5 196.0L343.4 54.8M3041.7 196.0L350.8 54.8" stroke="url(#lg)" stroke-width="1.1" fill="none"/><g fill="#8a8686" opacity="0.7"><ellipse cx="85.0" cy="159.0" rx="1.28" ry="0.70"/><ellipse cx="87.3" cy="152.7" rx="1.21" ry="0.66"/><ellipse cx="95.3" cy="159.0" rx="1.28" ry="0.70"/><ellipse cx="97.0" cy="152.7" rx="1.21" ry="0.66"/><ellipse cx="158.7" cy="159.0" rx="1.28" ry="0.70"/><ellipse cx="157.0" cy="152.7" rx="1.21" ry="0.66"/><ellipse cx="169.0" cy="159.0" rx="1.28" ry="0.70"/><ellipse cx="166.7" cy="152.7" rx="1.21" ry="0.66"/><ellipse cx="232.4" cy="159.0" rx="1.28" ry="0.70"/><ellipse cx="226.6" cy="152.7" rx="1.21" ry="0.66"/><ellipse cx="242.7" cy="159.0" rx="1.28" ry="0.70"/><ellipse cx="236.4" cy="152.7" rx="1.21" ry="0.66"/><ellipse cx="11.3" cy="159.0" rx="1.28" ry="0.70"/><ellipse cx="17.6" cy="152.7" rx="1.21" ry="0.66"/><ellipse cx="21.6" cy="159.0" rx="1.28" ry="0.70"/><ellipse cx="27.4" cy="152.7" rx="1.21" ry="0.66"/><ellipse cx="97.2" cy="125.2" rx="0.90" ry="0.49"/><ellipse cx="98.4" cy="122.0" rx="0.87" ry="0.47"/><ellipse cx="104.6" cy="125.2" rx="0.90" ry="0.49"/><ellipse cx="105.4" cy="122.0" rx="0.87" ry="0.47"/><ellipse cx="149.4" cy="125.2" rx="0.90" ry="0.49"/><ellipse cx="148.6" cy="122.0" rx="0.87" ry="0.47"/><ellipse cx="156.8" cy="125.2" rx="0.90" ry="0.49"/><ellipse cx="155.6" cy="122.0" rx="0.87" ry="0.47"/><ellipse cx="45.0" cy="125.2" rx="0.90" ry="0.49"/><ellipse cx="48.2" cy="122.0" rx="0.87" ry="0.47"/><ellipse cx="52.3" cy="125.2" rx="0.90" ry="0.49"/><ellipse cx="55.3" cy="122.0" rx="0.87" ry="0.47"/><ellipse cx="201.7" cy="125.2" rx="0.90" ry="0.49"/><ellipse cx="198.7" cy="122.0" rx="0.87" ry="0.47"/><ellipse cx="209.0" cy="125.2" rx="0.90" ry="0.49"/><ellipse cx="205.8" cy="122.0" rx="0.87" ry="0.47"/><ellipse cx="-7.2" cy="125.2" rx="0.90" ry="0.49"/><ellipse cx="-1.9" cy="122.0" rx="0.87" ry="0.47"/><ellipse cx="0.1" cy="125.2" rx="0.90" ry="0.49"/><ellipse cx="5.1" cy="122.0" rx="0.87" ry="0.47"/><ellipse cx="253.9" cy="125.2" rx="0.90" ry="0.49"/><ellipse cx="248.9" cy="122.0" rx="0.87" ry="0.47"/><ellipse cx="261.2" cy="125.2" rx="0.90" ry="0.49"/><ellipse cx="255.9" cy="122.0" rx="0.87" ry="0.47"/><ellipse cx="23.1" cy="106.7" rx="0.70" ry="0.38"/><ellipse cx="26.3" cy="104.7" rx="0.68" ry="0.37"/><ellipse cx="28.8" cy="106.7" rx="0.70" ry="0.38"/><ellipse cx="31.8" cy="104.7" rx="0.68" ry="0.37"/><ellipse cx="63.5" cy="106.7" rx="0.70" ry="0.38"/><ellipse cx="65.5" cy="104.7" rx="0.68" ry="0.37"/><ellipse cx="69.2" cy="106.7" rx="0.70" ry="0.38"/><ellipse cx="71.0" cy="104.7" rx="0.68" ry="0.37"/><ellipse cx="104.0" cy="106.7" rx="0.70" ry="0.38"/><ellipse cx="104.7" cy="104.7" rx="0.68" ry="0.37"/><ellipse cx="109.6" cy="106.7" rx="0.70" ry="0.38"/><ellipse cx="110.2" cy="104.7" rx="0.68" ry="0.37"/><ellipse cx="144.4" cy="106.7" rx="0.70" ry="0.38"/><ellipse cx="143.8" cy="104.7" rx="0.68" ry="0.37"/><ellipse cx="150.0" cy="106.7" rx="0.70" ry="0.38"/><ellipse cx="149.3" cy="104.7" rx="0.68" ry="0.37"/><ellipse cx="184.8" cy="106.7" rx="0.70" ry="0.38"/><ellipse cx="183.0" cy="104.7" rx="0.68" ry="0.37"/><ellipse cx="190.5" cy="106.7" rx="0.70" ry="0.38"/><ellipse cx="188.5" cy="104.7" rx="0.68" ry="0.37"/><ellipse cx="225.2" cy="106.7" rx="0.70" ry="0.38"/><ellipse cx="222.2" cy="104.7" rx="0.68" ry="0.37"/><ellipse cx="230.9" cy="106.7" rx="0.70" ry="0.38"/><ellipse cx="227.7" cy="104.7" rx="0.68" ry="0.37"/></g><rect y="43" width="253" height="95" fill="url(#fog)"/><ellipse cx="98.5" cy="104.5" rx="10" ry="7" fill="#2d6ba6"/><ellipse cx="106" cy="109" rx="7" ry="5" fill="#2d6ba6"/><path d="M107.5 67.0L145.0 67.0M107.5 67.0L107.5 117.0M145.0 67.0L145.0 117.0M107.5 117.0L145.0 117.0M104.0 121.5L107.5 117.0M148.5 121.5L145.0 117.0" stroke="#25c12a" stroke-width="1" fill="none"/><ellipse cx="126.5" cy="113" rx="19" ry="6.3" fill="#2b7dc3"/><ellipse cx="127.5" cy="116.30000000000001" rx="14" ry="4.6" fill="#0b0c0d"/><ellipse cx="126.5" cy="110" rx="12" ry="5.5" fill="#0e1216"/><clipPath id="bc"><circle cx="126.30000000000001" cy="90" r="19.5"/></clipPath><circle cx="126.30000000000001" cy="90" r="19.5" fill="url(#ball)"/><g clip-path="url(#bc)"><ellipse cx="126.30000000000001" cy="109" rx="15" ry="7.5" fill="#0c151e" opacity="0.85"/><ellipse cx="110.30000000000001" cy="98" rx="7" ry="13" fill="#123a62" opacity="0.55"/></g><circle cx="126.80000000000001" cy="90" r="12.3" fill="#15181b"/><path d="M119.30000000000001 81.5a11 11 0 0 1 17 3" stroke="#aab4bc" stroke-width="1.6" fill="none" opacity="0.85"/><path d="M136.8 86a11 11 0 0 1 -4 13" stroke="#6a747c" stroke-width="1.4" fill="none" opacity="0.8"/><path d="M115.80000000000001 92a11 11 0 0 0 8 8.500" stroke="#59626a" stroke-width="1.2" fill="none" opacity="0.7"/><circle cx="126.80000000000001" cy="90" r="8.3" fill="none" stroke="#3a4046" stroke-width="1"/><circle cx="126.80000000000001" cy="90" r="6.3" fill="#3c90d2"/><circle cx="126.80000000000001" cy="90" r="2.7" fill="#0a0a0a"/><path d="M106.80000000000001 90.5h7.5M139.3 90.5h6.5" stroke="#0f2a44" stroke-width="1"/><path d="M104.0 72.0L148.5 72.0M104.0 72.0L104.0 121.5M148.5 72.0L148.5 121.5M104.0 72.0L107.5 67.0M148.5 72.0L145.0 67.0" stroke="#25c12a" stroke-width="1.1" fill="none"/><path d="M104.0 121.5L110.0 121.5M143.0 121.5L148.5 121.5" stroke="#25c12a" stroke-width="1.1" fill="none"/></svg>
</div>

<!-- ================= ASSET BROWSER ================= -->
<div class="panel" style="left:3px;top:256px;width:424px;height:191px;border-bottom:1px solid #4b4d4f"></div>
<div class="tab" style="left:3px;top:239px;width:102px;border-color:#4688bd;letter-spacing:-0.15px">Asset Browser<span class="x" style="right:4px">✕</span></div>
<div id="assets">
<svg class="abs" style="left:11px;top:266.5px" width="8" height="8" viewBox="0 0 8 8"><path d="M7 0.700L1.200 4L7 7.300" fill="none" stroke="#d0d0d0" stroke-width="1.100"/></svg>
<div class="abs" style="left:27px;top:260px;width:16px;height:17px;background:#565759;border-radius:2px"></div>
<div class="t" style="left:25px;top:262px;color:#e6e6e6;width:18px;overflow:hidden;font-size:11.5px">nts</div>
<svg class="abs" style="left:50.500px;top:266.500px" width="8" height="8" viewBox="0 0 8 8"><path d="M1 0.700L6.800 4L1 7.300" fill="none" stroke="#5c5d5e" stroke-width="1.100"/></svg>
<div class="abs" style="left:66px;top:259px;width:60px;height:19px;background:#2a2b2d;border-radius:2px 0 0 2px;border:1px solid #303132"></div>
<div class="t" style="left:71px;top:262px;color:#808080">Search</div>
<div class="btn" style="left:125px;top:260px;width:56px;height:17px;line-height:18.5px">Import</div>
<div class="btn" style="left:184px;top:260px;width:56px;height:17px;line-height:18.5px;text-align:left;padding-left:6px">Create</div>
<div class="arr" style="left:227.5px;top:266.5px;border-top-color:#f0f0f0;border-left-width:4.5px;border-right-width:4.5px"></div>
<div class="btn" style="left:243px;top:260px;width:56px;height:17px;line-height:18.5px;text-align:left;padding-left:10px">Filter</div>
<div class="arr" style="left:286px;top:266.5px;border-top-color:#f0f0f0;border-left-width:4.5px;border-right-width:4.5px"></div>
<div class="abs" style="left:7px;top:280px;width:292px;height:142px;background:#252628;overflow:hidden;border-radius:2px">
<svg class="abs" style="left:17.0px;top:1.0px" width="31" height="39" viewBox="0 0 31 39"><defs><linearGradient id="pg17.01" x1="0" y1="0" x2="0" y2="1"><stop offset="0" stop-color="#f8f8f8"/><stop offset="1" stop-color="#f1f1f1"/></linearGradient></defs><path d="M0.5 0.5h21.5l8.5 8.5v29.5h-30z" fill="url(#pg17.01)" stroke="#dcdcdc" stroke-width="0.6"/><path d="M22 0.5v8.5h8.5z" fill="#c4c4c4"/><text x="15.3" y="25.8" text-anchor="middle" font-family="Liberation Sans, sans-serif" font-size="17.5" fill="#343434" stroke="#343434" stroke-width="0.25" letter-spacing="-0.6">C#</text></svg>
<div class="t os" style="left:1.0px;top:46.0px;width:63px;text-align:center;color:#e0e0e0">Bullet.cs</div>
<svg class="abs" style="left:80.8px;top:1.0px" width="31" height="39" viewBox="0 0 31 39"><defs><linearGradient id="pg80.81" x1="0" y1="0" x2="0" y2="1"><stop offset="0" stop-color="#f8f8f8"/><stop offset="1" stop-color="#f1f1f1"/></linearGradient></defs><path d="M0.5 0.5h21.5l8.5 8.5v29.5h-30z" fill="url(#pg80.81)" stroke="#dcdcdc" stroke-width="0.6"/><path d="M22 0.5v8.5h8.5z" fill="#c4c4c4"/><text x="15.3" y="25.8" text-anchor="middle" font-family="Liberation Sans, sans-serif" font-size="17.5" fill="#343434" stroke="#343434" stroke-width="0.25" letter-spacing="-0.6">C#</text></svg>
<div class="t os" style="left:64.8px;top:46.0px;width:63px;text-align:center;color:#e0e0e0">Camera.cs</div>
<svg class="abs" style="left:144.6px;top:1.0px" width="31" height="39" viewBox="0 0 31 39"><defs><linearGradient id="pg144.61" x1="0" y1="0" x2="0" y2="1"><stop offset="0" stop-color="#f8f8f8"/><stop offset="1" stop-color="#f1f1f1"/></linearGradient></defs><path d="M0.5 0.5h21.5l8.5 8.5v29.5h-30z" fill="url(#pg144.61)" stroke="#dcdcdc" stroke-width="0.6"/><path d="M22 0.5v8.5h8.5z" fill="#c4c4c4"/><text x="15.3" y="25.8" text-anchor="middle" font-family="Liberation Sans, sans-serif" font-size="17.5" fill="#343434" stroke="#343434" stroke-width="0.25" letter-spacing="-0.6">C#</text></svg>
<div class="t os" style="left:128.6px;top:46.0px;width:63px;text-align:center;color:#e0e0e0">Destroy.cs</div>
<svg class="abs" style="left:208.4px;top:1.0px" width="31" height="39" viewBox="0 0 31 39"><defs><linearGradient id="pg208.41" x1="0" y1="0" x2="0" y2="1"><stop offset="0" stop-color="#f8f8f8"/><stop offset="1" stop-color="#f1f1f1"/></linearGradient></defs><path d="M0.5 0.5h21.5l8.5 8.5v29.5h-30z" fill="url(#pg208.41)" stroke="#dcdcdc" stroke-width="0.6"/><path d="M22 0.5v8.5h8.5z" fill="#c4c4c4"/><text x="15.3" y="25.8" text-anchor="middle" font-family="Liberation Sans, sans-serif" font-size="17.5" fill="#343434" stroke="#343434" stroke-width="0.25" letter-spacing="-0.6">C#</text></svg>
<div class="t os" style="left:192.4px;top:46.0px;width:63px;text-align:center;color:#e0e0e0">EnemyC...</div>
<svg class="abs" style="left:17.0px;top:64.1px" width="31" height="39" viewBox="0 0 31 39"><defs><linearGradient id="pg17.064" x1="0" y1="0" x2="0" y2="1"><stop offset="0" stop-color="#f8f8f8"/><stop offset="1" stop-color="#f1f1f1"/></linearGradient></defs><path d="M0.5 0.5h21.5l8.5 8.5v29.5h-30z" fill="url(#pg17.064)" stroke="#dcdcdc" stroke-width="0.6"/><path d="M22 0.5v8.5h8.5z" fill="#c4c4c4"/><text x="15.3" y="25.8" text-anchor="middle" font-family="Liberation Sans, sans-serif" font-size="17.5" fill="#343434" stroke="#343434" stroke-width="0.25" letter-spacing="-0.6">C#</text></svg>
<div class="t os" style="left:1.0px;top:109.1px;width:63px;text-align:center;color:#e0e0e0">FireContr...</div>
<svg class="abs" style="left:80.8px;top:64.1px" width="31" height="39" viewBox="0 0 31 39"><defs><linearGradient id="pg80.864" x1="0" y1="0" x2="0" y2="1"><stop offset="0" stop-color="#f8f8f8"/><stop offset="1" stop-color="#f1f1f1"/></linearGradient></defs><path d="M0.5 0.5h21.5l8.5 8.5v29.5h-30z" fill="url(#pg80.864)" stroke="#dcdcdc" stroke-width="0.6"/><path d="M22 0.5v8.5h8.5z" fill="#c4c4c4"/><text x="15.3" y="25.8" text-anchor="middle" font-family="Liberation Sans, sans-serif" font-size="17.5" fill="#343434" stroke="#343434" stroke-width="0.25" letter-spacing="-0.6">C#</text></svg>
<div class="t os" style="left:64.8px;top:109.1px;width:63px;text-align:center;color:#e0e0e0">HealthCo...</div>
<svg class="abs" style="left:144.6px;top:64.1px" width="31" height="39" viewBox="0 0 31 39"><defs><linearGradient id="pg144.664" x1="0" y1="0" x2="0" y2="1"><stop offset="0" stop-color="#f8f8f8"/><stop offset="1" stop-color="#f1f1f1"/></linearGradient></defs><path d="M0.5 0.5h21.5l8.5 8.5v29.5h-30z" fill="url(#pg144.664)" stroke="#dcdcdc" stroke-width="0.6"/><path d="M22 0.5v8.5h8.5z" fill="#c4c4c4"/><text x="15.3" y="25.8" text-anchor="middle" font-family="Liberation Sans, sans-serif" font-size="17.5" fill="#343434" stroke="#343434" stroke-width="0.25" letter-spacing="-0.6">C#</text></svg>
<div class="t os" style="left:128.6px;top:109.1px;width:63px;text-align:center;color:#e0e0e0">InitRotati...</div>
<svg class="abs" style="left:208.4px;top:64.1px" width="31" height="39" viewBox="0 0 31 39"><defs><linearGradient id="pg208.464" x1="0" y1="0" x2="0" y2="1"><stop offset="0" stop-color="#f8f8f8"/><stop offset="1" stop-color="#f1f1f1"/></linearGradient></defs><path d="M0.5 0.5h21.5l8.5 8.5v29.5h-30z" fill="url(#pg208.464)" stroke="#dcdcdc" stroke-width="0.6"/><path d="M22 0.5v8.5h8.5z" fill="#c4c4c4"/><text x="15.3" y="25.8" text-anchor="middle" font-family="Liberation Sans, sans-serif" font-size="17.5" fill="#343434" stroke="#343434" stroke-width="0.25" letter-spacing="-0.6">C#</text></svg>
<div class="t os" style="left:192.4px;top:109.1px;width:63px;text-align:center;color:#e0e0e0">PlayerCo...</div>
<svg class="abs" style="left:17.0px;top:127.2px" width="31" height="39" viewBox="0 0 31 39"><defs><linearGradient id="pg17.0127" x1="0" y1="0" x2="0" y2="1"><stop offset="0" stop-color="#f8f8f8"/><stop offset="1" stop-color="#f1f1f1"/></linearGradient></defs><path d="M0.5 0.5h21.5l8.5 8.5v29.5h-30z" fill="url(#pg17.0127)" stroke="#dcdcdc" stroke-width="0.6"/><path d="M22 0.5v8.5h8.5z" fill="#c4c4c4"/><text x="15.3" y="25.8" text-anchor="middle" font-family="Liberation Sans, sans-serif" font-size="17.5" fill="#343434" stroke="#343434" stroke-width="0.25" letter-spacing="-0.6">C#</text></svg>
<svg class="abs" style="left:80.8px;top:127.2px" width="31" height="39" viewBox="0 0 31 39"><defs><linearGradient id="pg80.8127" x1="0" y1="0" x2="0" y2="1"><stop offset="0" stop-color="#e0e0e0"/><stop offset="1" stop-color="#d9d9d9"/></linearGradient></defs><path d="M0.5 0.5h21.5l8.5 8.5v29.5h-30z" fill="url(#pg80.8127)" stroke="#dcdcdc" stroke-width="0.6"/><path d="M22 0.5v8.5h8.5z" fill="#c4c4c4"/><rect x="5" y="15" width="21" height="24" fill="#4a4a4a"/></svg>
<div class="abs" style="left:279.5px;top:6px;width:8.5px;height:97px;background:#55575a;border-radius:3px"></div>
</div>
<svg class="abs" style="left:300px;top:292px" width="126" height="112" viewBox="0 0 126 112">
<defs><linearGradient id="ff" x1="0" y1="0" x2="0" y2="1"><stop offset="0" stop-color="#62b4ec"/><stop offset="1" stop-color="#52a4e0"/></linearGradient></defs>
<path d="M1.5 6a4.5 4.5 0 0 1 4.500 -4.500h28.500q3 0 5 3l3 4q1.500 2 4 2h66q4 0 4 4v92q0 4 -4 4h-102q-9.500 0 -9.500 -9z" fill="#3a82ba" stroke="#2c6a9c" stroke-width="1.2"/>
<rect x="6" y="16.500" width="106" height="88" fill="#e6e6e6"/><rect x="6" y="16.500" width="106" height="1.500" fill="#fbfbfb"/>
<rect x="9" y="31" width="115.500" height="79.500" rx="5" fill="url(#ff)" stroke="#4a9cd8" stroke-width="0.8"/>
</svg>
<div class="t" style="left:300px;top:412px;width:126px;text-align:center;font-family:'DejaVu Sans',sans-serif;font-weight:bold;font-size:10px;letter-spacing:-0.2px;color:#dcdcdc">components</div>
<div class="t" style="left:300px;top:426px;width:126px;text-align:center;color:#c4c4c4">Assets : 10</div>
<div class="t" style="left:7px;top:428.500px;color:#d0d0d0">10 items</div>
<div class="abs" style="left:203px;top:431.5px;width:95px;height:6px;background:#27292b;border-radius:3px"></div>
<div class="abs" style="left:212px;top:429px;width:9px;height:11.5px;background:linear-gradient(#a8aaac,#8e9092);border-radius:2px"></div>
<svg class="abs" style="left:269px;top:380px" width="14" height="20" viewBox="0 0 14 20"><path d="M1.5 1.500v14l3.300 -3.200l2.500 5.700l2.200 -1l-2.500 -5.500h4.800z" fill="#fff" stroke="#000" stroke-width="1"/></svg>
</div>

<!-- ================= PARAMETERS ================= -->
<div class="panel" style="left:428px;top:17px;width:357px;height:430px;background:#454647;border-left:1px solid #2c2e2f"></div>
<div class="tab" style="left:429px;top:1px;width:89px;border-color:#555;padding-left:7px">Parameters<span class="x">✕</span></div>
<div id="params">
<div class="abs" style="left:431px;top:38px;width:354px;height:409px;background:#414243;border-left:1px solid #4c4e50;border-right:1px solid #333436;border-top:1px solid #4d4f50"></div>
<div class="abs" style="left:474px;top:21px;width:52px;height:17px;background:#323436;border-radius:2px 2px 0 0;border:1px solid #3a3c3e;border-bottom:none"></div>
<div class="t" style="left:483.5px;top:22.8px;color:#c6c6c6">Physics</div>
<div class="abs" style="left:431px;top:20px;width:43px;height:19px;background:#434445;border-radius:3px 3px 0 0;border:1px solid #3f74a2;border-bottom:none"></div>
<div class="t" style="left:440px;top:22.8px;color:#ececec">Node</div>
<div class="abs" style="left:442.5px;top:49.5px;width:12px;height:12px;border:1px solid #707070;border-radius:2px;background:#454545"><div style="position:absolute;left:1.5px;top:1.5px;width:7px;height:7px;background:#a0a0a0;border-radius:1px"></div></div>
<div class="abs" style="left:463.5px;top:46.5px;width:310.5px;height:18.5px;background:#272829;border-radius:2px;border:1px solid #48494b"></div>
<div class="t" style="left:469px;top:50px;color:#dedede">material_ball</div>
<div class="t" style="left:442px;top:74.5px;font-family:'DejaVu Sans',sans-serif;font-weight:bold;letter-spacing:-0.1px;color:#cfcfcf;font-size:11.8px;letter-spacing:0">Type:</div>
<div class="t" style="left:482px;top:75.500px;font-family:'DejaVu Sans',sans-serif;font-weight:bold;letter-spacing:-0.1px;color:#cfcfcf;font-size:9.8px">ObjectMeshStatic</div>
<div class="t" style="right:11px;top:75.500px;font-family:'DejaVu Sans',sans-serif;font-weight:bold;letter-spacing:-0.1px;color:#cfcfcf;font-size:10.1px">ID: 1800376072</div>
<div class="abs" style="left:443px;top:96px;width:331px;height:1px;background:#2a2a2a"></div>
<div class="arrr" style="left:451px;top:105.5px;border-left-color:#d8d8d8"></div>
<div class="t" style="left:465px;top:103px;color:#e4e4e4">Common</div>
<div class="abs" style="left:443px;top:123px;width:331px;height:1px;background:#2a2a2a"></div>
<div class="arr" style="left:450px;top:134px;border-top-color:#d8d8d8"></div>
<div class="t" style="left:465px;top:130px;color:#e4e4e4">Node Properties</div>
<div class="abs" style="left:562px;top:154.5px;width:108px;height:18.500px;background:#595a5c;border:1px solid #3b3c3e;border-radius:3px"></div>
<svg class="abs" style="left:566px;top:157px" width="12" height="12" viewBox="0 0 12 12"><path d="M5.5 1.500h2v4h4v2h-4v4h-2v-4h-4v-2h4z" fill="none" stroke="#2a2a2a" stroke-width="1" opacity="0.6"/><path d="M4.500 0.500h2v4h4v2h-4v4h-2v-4h-4v-2h4z" fill="#555" stroke="#ececec" stroke-width="1"/></svg>
<div class="t" style="left:583.5px;top:156.5px;color:#ececec">Add New Property</div>
<div class="abs" style="left:443px;top:179px;width:331px;height:1px;background:#2a2a2a"></div>
<div class="arr" style="left:450px;top:190px;border-top-color:#d8d8d8"></div>
<div class="t" style="left:465px;top:186px;color:#e4e4e4">Mesh Static</div>
<div class="t" style="left:445px;top:210.500px;color:#b4b4b4">Mesh</div>
<div class="abs" style="left:549.5px;top:207.5px;width:154px;height:18.5px;background:#272829;border-radius:2px;border:1px solid #48494b"></div>
<svg class="abs" style="left:553px;top:209.500px" width="15" height="15" viewBox="0 0 15 15"><rect width="15" height="15" rx="1.500" fill="#3c3c3c"/><circle cx="7.500" cy="6.500" r="4.300" fill="#e8e8e8"/><path d="M4.500 9.500h6v3h-6z" fill="#d8d8d8"/><circle cx="6" cy="6" r="1.200" fill="#bdbdbd"/></svg>
<div class="t" style="left:573.5px;top:210.500px;color:#dcdcdc">material_ball.mesh</div>
<svg class="abs" style="left:711px;top:210px" width="16" height="14" viewBox="0 0 16 14"><path d="M1.200 12.500v-11.300h5.800l1.500 1.900h6v9.400z" fill="#4a4b4d" stroke="#ececec" stroke-width="1.200" stroke-linejoin="round"/><path d="M1.200 4.800h13.300v7.700h-13.300z" fill="#8c8c8c" stroke="#ececec" stroke-width="1.100"/></svg>
<svg class="abs" style="left:735px;top:210.500px" width="14" height="13" viewBox="0 0 14 13"><path d="M3.800 0.700h9.200v8.800z" fill="#8c8c8c" stroke="#ececec" stroke-width="1" stroke-linejoin="round"/><path d="M0.700 3.500v8.800h9.200z" fill="#8c8c8c" stroke="#ececec" stroke-width="1" stroke-linejoin="round"/></svg>
<svg class="abs" style="left:755px;top:209px" width="18" height="16" viewBox="0 0 18 16"><path d="M5 9.500H1.200v5.600h15.400v-5.600H13.500" fill="none" stroke="#c4c4c4" stroke-width="1.300"/><path d="M13 0.300L8.300 5.600L10.700 5.900Q9.500 9.500 5.600 12.400L8 12.800Q12.200 9.600 12.700 6.200L14.800 6.500Z" fill="#4aa6e8" stroke="#2f7fc0" stroke-width="0.500"/></svg>
<div class="abs" style="left:445px;top:232.5px;width:329px;height:1px;background:#2a2a2a"></div>
<div class="arr" style="left:452px;top:243px;border-top-color:#d8d8d8"></div>
<div class="t" style="left:468px;top:238.500px;color:#e4e4e4">Surfaces</div>
<svg class="abs" style="left:751px;top:240px" width="14" height="10" viewBox="0 0 14 10"><path d="M0 1h14M0 5h14M0 9h14" stroke="#9c9c9c" stroke-width="1.300"/></svg>
<div class="abs" style="left:448.500px;top:261px;width:62.500px;height:186px;background:#232425;overflow:hidden;border:1px solid #2c2c2c;border-bottom:none">
<div class="abs" style="left:0;top:0.0px;width:62px;height:15.2px;background:#2c5f8b"></div>
<div class="abs" style="left:0;top:30.4px;width:62px;height:15.2px;background:#29292a"></div>
<div class="abs" style="left:0;top:60.8px;width:62px;height:15.2px;background:#29292a"></div>
<div class="abs" style="left:0;top:91.2px;width:62px;height:15.2px;background:#29292a"></div>
<div class="abs" style="left:0;top:121.6px;width:62px;height:15.2px;background:#29292a"></div>
<div class="abs" style="left:0;top:152.0px;width:62px;height:15.2px;background:#29292a"></div>
<div class="abs" style="left:0;top:182.4px;width:62px;height:15.2px;background:#29292a"></div>
</div>
<div class="abs" style="left:459px;top:264px;width:11px;height:11px;border:1px solid #8a99a6;border-radius:2px;background:#3a5a76"><div style="position:absolute;left:1px;top:1px;width:7px;height:7px;background:#b4bcc2;border-radius:1px"></div></div>
<div class="t os" style="left:476.500px;top:262.8px;color:#e8e8e8">mat...</div>
<div class="t" style="left:518.500px;top:259.500px;color:#e6e6e6">Rendering</div>
<div class="t" style="left:492px;top:282px;width:100px;text-align:right;color:#bcbcbc">Viewport Mask</div>
<div class="abs" style="left:597.5px;top:278px;width:176.5px;height:20px;background:linear-gradient(#5e5f61,#58595b);border-radius:3px;border:1px solid #35363a"></div><div class="t" style="left:598.5px;top:281px;width:164px;text-align:center;color:#d4d4d4">Viewport Mask 0</div>
<div class="arr" style="left:760px;top:285.500px;border-top-color:#f4f4f4;border-left-width:4.500px;border-right-width:4.500px"></div>
<div class="t" style="left:492px;top:307px;width:100px;text-align:right;color:#bcbcbc">Shadow Mask</div>
<div class="abs" style="left:597.5px;top:303px;width:176.5px;height:20px;background:linear-gradient(#5e5f61,#58595b);border-radius:3px;border:1px solid #35363a"></div><div class="t" style="left:598.5px;top:306px;width:164px;text-align:center;color:#d4d4d4">Shadow Mask 0</div>
<div class="arr" style="left:760px;top:310.500px;border-top-color:#f4f4f4;border-left-width:4.500px;border-right-width:4.500px"></div>
<div class="t" style="left:491px;top:332px;width:100px;text-align:right;color:#bcbcbc">Shadow Mode</div>
<div class="abs" style="left:652.5px;top:328.5px;width:121.5px;height:20px;background:linear-gradient(#5e5f61,#58595b);border-radius:3px;border:1px solid #35363a"></div><div class="t" style="left:658.0px;top:331.5px;color:#d4d4d4">Static</div>
<div class="arr" style="left:763px;top:336.500px;border-top-color:#9a9a9a;border-left-width:3.500px;border-right-width:3.500px;border-top-width:4px"></div>
<div class="abs" style="left:526.5px;top:354.5px;width:12px;height:12px;border:1px solid #707070;border-radius:2px;background:#454545"><div style="position:absolute;left:1.5px;top:1.5px;width:7px;height:7px;background:#a0a0a0;border-radius:1px"></div></div>
<div class="t" style="left:544px;top:353.5px;color:#d8d8d8">Cast Proj and Omni Shadows</div>
<div class="abs" style="left:526.5px;top:373.5px;width:12px;height:12px;border:1px solid #707070;border-radius:2px;background:#454545"><div style="position:absolute;left:1.5px;top:1.5px;width:7px;height:7px;background:#a0a0a0;border-radius:1px"></div></div>
<div class="t" style="left:544px;top:372.5px;color:#d8d8d8">Cast World Shadows</div>
<div class="abs" style="left:526.5px;top:392.8px;width:12px;height:12px;border:1px solid #707070;border-radius:2px;background:#454545"><div style="position:absolute;left:1.5px;top:1.5px;width:7px;height:7px;background:#a0a0a0;border-radius:1px"></div></div>
<div class="t" style="left:544px;top:391.8px;color:#d8d8d8">Bake to Voxel Probes</div>
<div class="abs" style="left:526.5px;top:412px;width:12px;height:12px;border:1px solid #707070;border-radius:2px;background:#454545"><div style="position:absolute;left:1.5px;top:1.5px;width:7px;height:7px;background:#a0a0a0;border-radius:1px"></div></div>
<div class="t" style="left:544px;top:411.0px;color:#d8d8d8">Bake to Environment Probes</div>
<div class="abs" style="left:526.5px;top:431.4px;width:12px;height:12px;border:1px solid #707070;border-radius:2px;background:#454545"><div style="position:absolute;left:1.5px;top:1.5px;width:7px;height:7px;background:#a0a0a0;border-radius:1px"></div></div>
<div class="t" style="left:544px;top:430.4px;color:#d8d8d8">Cast Environment Probe Shadows</div>
<div class="abs" style="left:429px;top:443px;width:356px;height:4px;background:#454647;border-top:1px solid #525456"></div>
</div>

</body></html>
